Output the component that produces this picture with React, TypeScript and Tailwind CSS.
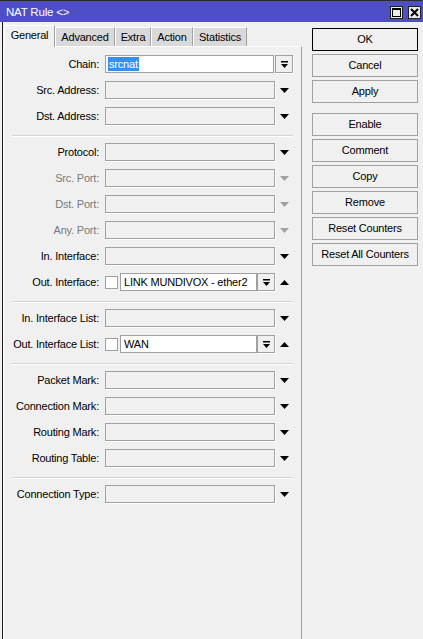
import React from 'react';

type Row = {
  label: string;
  kind?: 'chain' | 'neg' | 'plain';
  value?: string;
  disabled?: boolean;
};

const groups: Row[][] = [
  [
    { label: 'Chain:', kind: 'chain', value: 'srcnat' },
    { label: 'Src. Address:' },
    { label: 'Dst. Address:' },
  ],
  [
    { label: 'Protocol:' },
    { label: 'Src. Port:', disabled: true },
    { label: 'Dst. Port:', disabled: true },
    { label: 'Any. Port:', disabled: true },
    { label: 'In. Interface:' },
    { label: 'Out. Interface:', kind: 'neg', value: 'LINK MUNDIVOX - ether2' },
  ],
  [
    { label: 'In. Interface List:' },
    { label: 'Out. Interface List:', kind: 'neg', value: 'WAN' },
  ],
  [
    { label: 'Packet Mark:' },
    { label: 'Connection Mark:' },
    { label: 'Routing Mark:' },
    { label: 'Routing Table:' },
  ],
  [{ label: 'Connection Type:' }],
];

const tabs = [
  { name: 'General', w: 'w-[51px]' },
  { name: 'Advanced', w: 'w-[60px]' },
  { name: 'Extra', w: 'w-[36px]' },
  { name: 'Action', w: 'w-[42px]' },
  { name: 'Statistics', w: 'w-[54px]' },
];

const DownArrow = ({ grey }: { grey?: boolean }) => (
  <svg width="9" height="5" viewBox="0 0 9 5">
    <polygon points="0,0 9,0 4.5,5" fill={grey ? '#a0a0a0' : '#000'} />
  </svg>
);

const UpArrow = () => (
  <svg width="9" height="5" viewBox="0 0 9 5">
    <polygon points="0,5 9,5 4.5,0" fill="#000" />
  </svg>
);

// bar + triangle glyph used on combo buttons
const ComboButton = () => (
  <div className="flex h-[18px] w-[18px] items-center justify-center border border-[#a0a0a0] bg-[#f0f0f0] shadow-[1px_1px_0_#fff]">
    <svg width="7" height="7" viewBox="0 0 7 7">
      <rect x="0" y="0" width="7" height="1.5" fill="#000" />
      <polygon points="0,3 7,3 3.5,7" fill="#000" />
    </svg>
  </div>
);

const FieldRow = ({ row }: { row: Row }) => {
  const labelColor = row.disabled ? 'text-[#7a7a7a]' : 'text-black';
  return (
    <div className="flex h-[26px] items-center">
      <div className={`w-[95px] text-right ${labelColor}`}>{row.label}</div>
      <div className="ml-[6px] flex items-center">
        {row.kind === 'chain' && (
          <>
            <div className="flex h-[18px] w-[169px] items-center border border-[#a0a0a0] bg-white pl-[2px]">
              <span className="bg-[#3390f0] px-[1px] leading-[14px] text-white">{row.value}</span>
            </div>
            <div className="ml-[1px]">
              <ComboButton />
            </div>
          </>
        )}
        {row.kind === 'neg' && (
          <>
            <div className="h-[13px] w-[13px] border border-[#a0a0a0] bg-white" />
            <div className="ml-[2px] flex h-[18px] w-[137px] items-center border border-[#a0a0a0] bg-white pl-[3px]">
              {row.value}
            </div>
            <ComboButton />
            <div className="flex w-[18px] justify-center">
              <UpArrow />
            </div>
          </>
        )}
        {!row.kind && (
          <>
            <div className="h-[18px] w-[170px] border border-[#a0a0a0] bg-[#f0f0f0] shadow-[1px_1px_0_#fff]" />
            <div className="flex w-[18px] justify-center">
              <DownArrow grey={row.disabled} />
            </div>
          </>
        )}
      </div>
    </div>
  );
};

const Separator = () => (
  <div className="flex h-[10px] items-start pl-[8px] pt-[6px]">
    <div className="w-[281px] border-t border-b border-t-[#d4d4d4] border-b-white" />
  </div>
);

const actions = ['OK', 'Cancel', 'Apply', 'Enable', 'Comment', 'Copy', 'Remove', 'Reset Counters', 'Reset All Counters'];

const App = () => {
  return (
    <div
      className="flex h-[639px] w-[423px] flex-col overflow-hidden bg-[#f0f0f0] text-[11px] tracking-[-0.2px] text-black"
      style={{ fontFamily: '"Liberation Sans", Arial, sans-serif' }}
    >
      {/* title bar */}
      <div className="flex h-[22px] shrink-0 items-center border-t border-[#2a2a2a] bg-[#4e4fc7] pl-[6px] pr-[2px] pt-[2px]">
        <span className="flex-1 text-[11.5px] text-white">NAT Rule &lt;&gt;</span>
        <div className="flex gap-[5px]">
          <div className="flex h-[13px] w-[13px] items-center justify-center border border-[#202020] bg-[#ececec]">
            <svg width="9" height="9" viewBox="0 0 9 9">
              <rect x="0.5" y="0.5" width="8" height="8" fill="none" stroke="#000" />
              <rect x="0" y="0" width="9" height="2" fill="#000" />
            </svg>
          </div>
          <div className="flex h-[13px] w-[13px] items-center justify-center border border-[#202020] bg-[#ececec]">
            <svg width="9" height="9" viewBox="0 0 9 9">
              <path d="M1 1 L8 8 M8 1 L1 8" stroke="#000" strokeWidth="2" />
            </svg>
          </div>
        </div>
      </div>

      <div className="flex flex-1">
        {/* left: tabs + general panel */}
        <div className="ml-[2px] flex w-[300px] flex-col border-l border-[#1a1a1a]">
          <div className="flex h-[24px] items-end pl-[1px]">
            {tabs.map((t, i) => (
              <div
                key={t.name}
                className={`${t.w} flex items-center justify-center border-l border-t border-r border-l-white border-t-white border-r-[#a0a0a0] ${
                  i === 0 ? 'relative z-10 -mb-px h-[22px] bg-[#f0f0f0] pb-[3px]' : 'h-[19px] bg-[#d9d9d9]'
                }`}
              >
                {t.name}
              </div>
            ))}
          </div>
          <div className="flex-1 border-l border-t border-r border-l-white border-t-white border-r-[#a0a0a0] pt-[4px]">
            {groups.map((g, gi) => (
              <div key={gi}>
                {gi > 0 && <Separator />}
                {g.map((r) => (
                  <FieldRow key={r.label} row={r} />
                ))}
              </div>
            ))}
          </div>
        </div>

        {/* right: dialog buttons */}
        <div className="flex flex-col gap-[3px] pl-[10px] pt-[6px]">
          {actions.map((a, i) => (
            <div
              key={a}
              className={`flex h-[23px] w-[106px] items-center justify-center bg-[#f0f0f0] ${
                i === 0 ? 'border border-black' : 'border border-[#a0a0a0]'
              } ${i === 3 ? 'mt-[7px]' : ''}`}
            >
              {a}
            </div>
          ))}
        </div>
      </div>
    </div>
  );
};

export default App;
